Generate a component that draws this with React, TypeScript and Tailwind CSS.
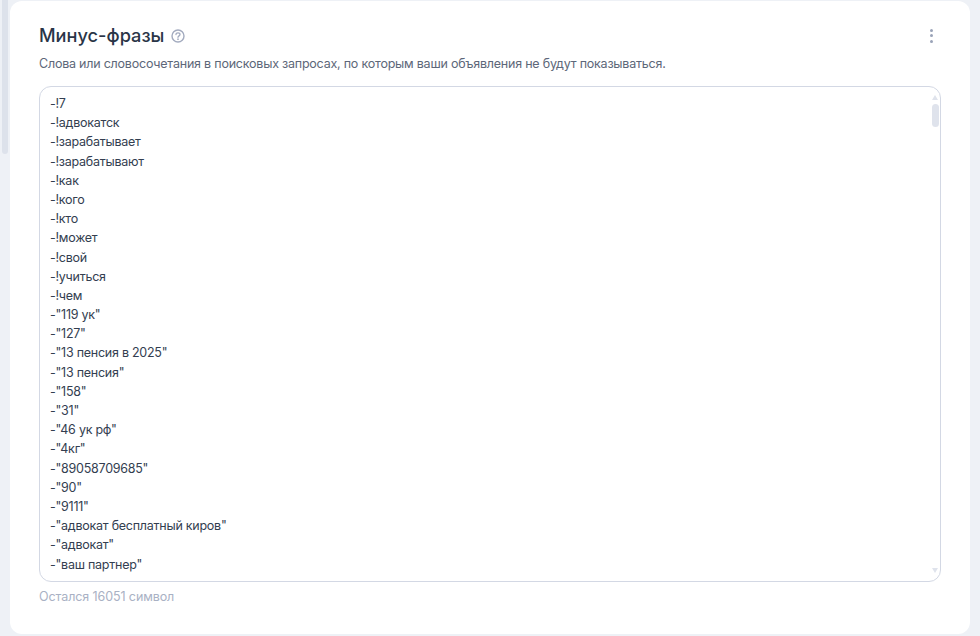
const phrases = [
  "-!7",
  "-!адвокатск",
  "-!зарабатывает",
  "-!зарабатывают",
  "-!как",
  "-!кого",
  "-!кто",
  "-!может",
  "-!свой",
  "-!учиться",
  "-!чем",
  '-"119 ук"',
  '-"127"',
  '-"13 пенсия в 2025"',
  '-"13 пенсия"',
  '-"158"',
  '-"31"',
  '-"46 ук рф"',
  '-"4кг"',
  '-"89058709685"',
  '-"90"',
  '-"9111"',
  '-"адвокат бесплатный киров"',
  '-"адвокат"',
  '-"ваш партнер"',
];

function HelpIcon() {
  return (
    <svg width="14" height="14" viewBox="0 0 14 14" fill="none" className="mt-[2px]">
      <circle cx="7" cy="7" r="6" stroke="#a3abbf" strokeWidth="1.4" />
      <path
        d="M5 5.6c0-1.100.9-1.800 2-1.800s2 .7 2 1.700c0 1.400-2 1.300-2 2.800"
        stroke="#a3abbf"
        strokeWidth="1.3"
        strokeLinecap="round"
      />
      <circle cx="7" cy="10.200" r="0.85" fill="#a3abbf" />
    </svg>
  );
}

function MoreDots() {
  return (
    <div className="mr-[8px] mt-[1px] flex flex-col gap-[2.5px]">
      <span className="h-[3px] w-[3px] rounded-full bg-[#9aa3b8]" />
      <span className="h-[3px] w-[3px] rounded-full bg-[#9aa3b8]" />
      <span className="h-[3px] w-[3px] rounded-full bg-[#9aa3b8]" />
    </div>
  );
}

export default function App() {
  return (
    <div
      className="relative h-[636px] w-[980px] overflow-hidden bg-[#eef1f6] pt-px pl-[10px] pr-[10px]"
      style={{ fontFamily: "Inter, 'Noto Sans', sans-serif" }}
    >
      {/* page scrollbar thumb */}
      <div className="absolute left-[2px] top-0 h-[154px] w-[6px] rounded-b-[3px] bg-[#dde2eb]" />

      <section className="h-[633px] rounded-[12px] bg-white pl-[29px] pr-[29px] pt-[22px]">
        <div className="flex h-[24px] items-center justify-between">
          <div className="flex items-center gap-[7px]">
            <h2 className="text-[18.2px] font-medium leading-[24px] text-[#2a3547]">Минус-фразы</h2>
            <HelpIcon />
          </div>
          <MoreDots />
        </div>

        <p className="mt-[9px] text-[12.5px] leading-[16px] tracking-[-0.22px] text-[#5d6779]">
          Слова или словосочетания в поисковых запросах, по которым ваши объявления не будут показываться.
        </p>

        <div className="relative mt-[14px] h-[496px] overflow-hidden rounded-[12px] border border-[#d3d8e4] pl-[10px] pt-[7px]">
          {phrases.map((line) => (
            <div
              key={line}
              className="h-[19.2px] whitespace-pre text-[12.5px] leading-[19.2px] tracking-[-0.25px] text-[#333e50]"
            >
              {line}
            </div>
          ))}

          {/* textarea scrollbar */}
          <div className="absolute right-[1px] top-[8px] bottom-[8px] flex w-[8px] flex-col items-center justify-between">
            <div className="flex flex-col items-center gap-[4px]">
              <div className="h-0 w-0 border-x-[3.5px] border-b-[5px] border-x-transparent border-b-[#dfe3ec]" />
              <div className="h-[23px] w-[7px] rounded-[4px] bg-[#dfe3ec]" />
            </div>
            <div className="h-0 w-0 border-x-[3.5px] border-t-[5px] border-x-transparent border-t-[#dfe3ec]" />
          </div>
        </div>

        <p className="mt-[7px] text-[12.5px] leading-[16px] tracking-[-0.1px] text-[#a9b1c4]">Остался 16051 символ</p>
      </section>
    </div>
  );
}
